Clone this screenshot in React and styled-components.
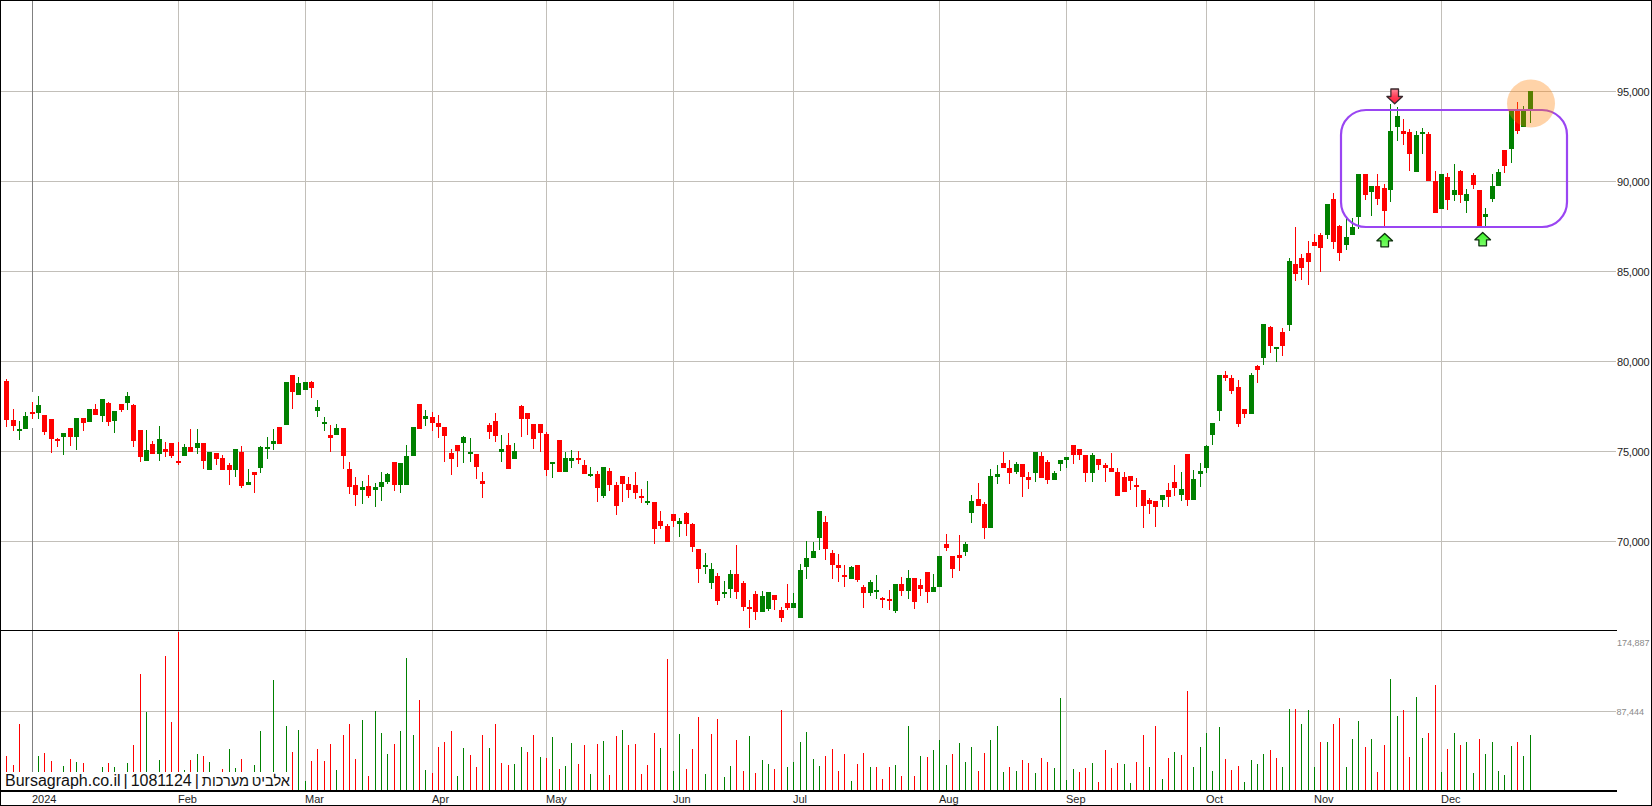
import React from "react";
import styled, { createGlobalStyle } from "styled-components";

const GlobalStyle = createGlobalStyle`
  html, body { margin: 0; padding: 0; background: #fff; overflow: hidden; }
`;

const Frame = styled.div`
  position: relative;
  box-sizing: border-box;
  width: 1652px;
  height: 806px;
  display: flex;
  flex-direction: column;
  background: #fff;
  border: 1px solid #000;
  font-family: "Liberation Sans", Arial, sans-serif;
`;
const PricePlot = styled.svg`
  display: block;
  flex: 0 0 629px;
  width: 1650px;
  height: 629px;
  shape-rendering: crispEdges;
`;
const VolumePanel = styled.div`
  position: relative;
  flex: 0 0 162px;
  height: 162px;
`;
const VolumePlot = styled.svg`
  display: block;
  width: 1650px;
  height: 162px;
  shape-rendering: crispEdges;
`;
const DateAxis = styled.svg`
  display: block;
  flex: 0 0 13px;
  width: 1650px;
  height: 13px;
`;
const Caption = styled.div`
  position: absolute;
  left: 3px;
  bottom: 2px;
  box-sizing: border-box;
  width: 287px;
  height: 18px;
  padding-left: 1px;
  background: #fff;
  color: #111;
  font-size: 16px;
  line-height: 18px;
  word-spacing: -1.5px;
  white-space: nowrap;
`;
const HebrewName = styled.span`
  font-size: 14.6px;
`;
const PriceTick = styled.text`
  font-size: 11px;
  letter-spacing: -0.2px;
  fill: #222;
  font-family: "Liberation Sans", Arial, sans-serif;
`;
const VolumeTick = styled.text`
  font-size: 9px;
  fill: #8a8a8a;
  font-family: "Liberation Sans", Arial, sans-serif;
`;
const DateTick = styled.text`
  font-size: 11px;
  fill: #222;
  font-family: "Liberation Sans", Arial, sans-serif;
`;

const UP = "#008000";
const DOWN = "#ff0000";
const GRID = "#c2bfb9";

// [zoomX, colour, high, bodyTop, bodyBottom, low]
const part = (ox, oy, s) =>
  s.trim().split(/\s+/).map((row) => {
    const [z, c, a, b, d, e] = row.split(",");
    return {
      x: ox + Math.floor(+z / 3),
      up: c === "g",
      hi: Math.round(oy + a / 3),
      top: Math.round(oy + b / 3),
      bot: Math.round(oy + d / 3),
      lo: Math.round(oy + e / 3),
    };
  });

const candles = [
  ...part(0, 360, `19,r,57,63,180,201 40,r,147,180,198,213 58,g,183,207,210,240 76,g,156,168,207,207 97,r,126,156,159,177 115,g,108,135,159,177 133,r,165,165,216,225 154,r,177,177,237,279 172,r,234,237,243,261 190,g,219,219,231,285 211,r,204,204,231,258 229,g,174,174,231,270 250,r,174,174,189,213 268,g,147,147,186,186 286,r,132,147,165,165 307,g,117,117,168,186 325,r,126,129,186,198 343,g,153,153,183,219 364,r,132,132,150,156 382,g,96,108,129,150 400,r,132,135,243,261 421,r,210,210,291,306 439,g,210,270,303,303 457,r,243,252,282,282 478,g,198,237,282,303 496,r,246,267,276,291 514,r,249,249,288,294 535,r,246,303,306,315 553,g,252,261,288,288 571,r,207,261,276,276 592,g,207,249,264,282 610,r,249,249,303,327 628,g,276,276,330,330 649,r,279,279,297,315 667,r,285,294,330,330 688,r,309,315,330,375 706,g,267,267,330,351 724,r,258,276,378,384 745,g,327,366,375,375 763,r,336,336,345,399 781,g,258,261,324,339 802,g,231,261,267,297 820,g,207,243,252,270 838,r,201,201,252,252 859,g,66,66,195,195 877,r,45,45,96,147 895,g,51,69,105,105 916,g,66,66,90,90 934,r,63,66,84,114 952,g,120,141,153,171 973,g,171,186,189,213 991,r,195,225,234,276 1009,g,192,204,225,225 1030,r,204,204,288,327 1048,r,306,327,381,402 1066,r,351,375,405,438 1087,g,363,381,390,432 1105,r,345,378,408,414 1126,g,369,381,390,441 1144,g,336,366,381,423 1162,g,339,342,366,372 1183,r,306,306,375,393 1201,g,309,309,375,399 1219,g,255,288,375,375 1240,g,201,201,288,288 1258,r,132,132,207,207`),
  ...part(420, 390, `16,g,60,78,87,108 37,r,66,81,99,123 55,r,75,99,111,144 73,r,111,111,138,216 94,r,177,189,207,255 112,r,165,165,183,231 130,g,138,141,159,219 151,g,144,186,189,216 169,r,192,192,231,267 187,r,246,273,282,324 208,r,99,105,126,147 226,r,69,93,138,156 244,g,135,177,186,216 265,r,129,165,237,237 283,g,159,183,207,207 304,r,45,48,87,141 322,r,69,69,87,135 340,r,102,102,147,177 361,r,102,102,129,186 379,r,126,132,240,258 397,g,216,216,219,264 418,r,150,150,246,246 436,g,186,204,246,246 454,g,180,204,213,234 475,r,183,204,207,222 493,r,210,225,252,252 511,g,231,252,255,261 532,r,243,252,294,336 550,g,231,231,318,324 568,r,234,243,285,303 589,r,276,285,348,375 607,r,258,258,282,336 625,r,261,282,300,324 646,r,246,285,309,327 664,r,297,318,324,339 682,g,273,333,336,345 703,r,336,336,417,462 721,r,363,393,408,417 742,r,402,408,456,456 760,r,372,372,393,411 778,g,384,393,402,441 799,r,366,369,402,438 817,r,399,402,471,486 835,r,477,477,537,579 856,g,489,525,528,552 874,g,519,537,579,597 892,r,549,558,633,645 913,g,573,606,609,624 931,g,540,552,597,624 949,r,465,552,606,627 970,r,573,579,651,663 988,r,630,651,654,714 1006,r,603,612,666,690 1027,g,603,618,666,666 1045,g,606,606,657,663 1063,r,615,615,630,660 1084,r,651,660,684,696 1102,r,582,639,654,660 1120,g,609,639,654,654 1141,g,522,540,684,684 1159,g,453,504,531,567 1180,g,456,483,504,504 1198,g,363,363,444,480 1216,r,378,396,477,510 1237,r,480,489,525,567 1255,r,492,525,534,576`),
  ...part(840, 400, `13,r,495,524,531,561 34,g,498,501,537,537 52,r,495,495,540,546 70,r,555,561,579,624 91,g,540,546,579,588 109,g,525,570,573,597 127,r,591,594,597,624 148,r,570,597,600,630 166,g,552,552,633,639 184,r,531,552,573,588 205,g,510,534,573,597 223,r,534,534,606,627 241,r,537,555,567,588 262,r,516,516,576,609 280,g,522,561,576,576 298,g,468,468,561,561 319,r,402,432,444,453 337,r,468,468,507,534 358,r,405,465,474,513 376,g,426,432,456,468 394,g,285,303,339,369 415,r,249,297,318,318 433,r,306,312,384,417 451,g,207,228,384,384 472,g,195,222,231,252 490,r,156,189,204,204 508,r,180,204,219,252 529,g,186,192,216,222 547,r,192,192,231,291 565,r,216,231,240,267 586,g,156,156,219,246 604,r,156,168,234,234 622,r,180,186,240,252 643,g,213,219,240,240 661,g,180,180,192,213 679,g,171,171,180,204 700,r,135,135,165,192 718,r,147,147,165,180 736,r,165,165,219,246 757,g,159,165,219,246 775,r,177,177,195,210 796,r,189,195,204,246 814,r,159,204,216,216 832,r,204,216,288,288 853,r,216,231,276,276 871,r,228,228,243,270 889,r,234,255,261,321 910,r,270,270,318,384 928,r,294,300,312,342 946,r,303,303,321,381 967,g,285,285,300,321 985,r,249,270,291,321 1003,r,195,246,264,288 1024,g,216,267,285,303 1042,r,162,162,300,318 1060,g,210,237,300,300 1081,g,189,213,222,261 1099,g,135,138,204,219 1117,g,69,69,105,135`),
  ...part(1180, 70, `118,g,915,915,1023,1053 136,r,903,915,923,933 154,r,915,924,962,972 175,r,930,951,1062,1071 193,r,1017,1017,1032,1044 214,g,909,915,1032,1032 232,r,885,888,900,938 250,g,762,762,864,885 271,r,768,771,828,849 289,g,831,831,837,876 307,r,774,786,828,858 328,g,564,573,765,783 346,r,471,582,612,633 364,r,552,564,594,630 385,r,513,549,576,645 403,r,492,516,528,528 421,r,489,495,534,606 442,g,402,402,495,507 460,r,369,387,516,537 478,r,465,468,549,573 499,g,440,501,525,540 517,g,445,471,495,495 535,g,312,312,441,477 556,r,312,312,375,390 574,g,348,348,366,438 592,r,312,348,387,405 613,r,342,354,423,468 631,g,102,183,360,396 652,g,111,138,171,213 670,r,147,183,192,225 688,r,177,186,252,303 709,g,183,195,306,306 727,g,174,186,189,252 745,r,186,192,333,333 766,r,303,333,429,429 784,g,312,312,417,417 802,r,309,321,390,420 823,g,282,360,375,393 841,r,300,303,375,399 859,g,357,372,393,429 880,r,309,315,345,357 898,r,360,360,468,468 916,g,414,432,441,471 937,g,312,348,387,396 955,g,297,306,348,348 973,r,240,240,288,309 994,g,117,117,237,279 1012,r,96,123,183,192 1030,g,108,117,171,171 1052,g,63,63,117,159`),
];

// one entry per candle: colour and height of the bar ("_" = hidden by the caption)
const volumes = `r408 r435 r312 _ _ g408 r399 r423 _ g438 r417 g426 r429 _ _ g441 r429 g441 _ g429 r375 r162 g276 _ g420 r108 r306 r35 g450 r420 g402 r408 g426 _ r447 g387 g444 r417 _ g435 g333 _ g180 _ g318 r396 g330 g483 r423 r387 r423 r372 g450 r345 r312 r417 g300 r468 g273 g339 g402 r372 g333 g114 g345 r240 g450 r459 r381 r366 r333 g468 g384 r405 r441 r345 g384 r312 r429 r435 g432 g381 r396 r345 g411 r414 g351 r447
g438 g369 r432 r375 g462 r372 g363 r465 r348 g330 r375 r372 r462 r435 r339 g384 r117 g453 g342 r447 r387 r291 g462 r342 r297 g471 g438 r360 r453 g348 r459 g420 g432 r447 r270 g441 g426 g366 g336 g417 g438 r408 r387 r453 r402 g483 r432 r399 g441 r441 r477 r441 g435 r468 g318 r468 g408 r411 g390 g360 g435 r402 g369 g426 g381 r453 r399 g360 g318 g456 r441 g453 r420 r429 g459 r414 r426 g444 g234 g480 g447 r456 r444 g429 r486 r390 r444 r429
g432 g489 r426 r345 g441 r318 g477 r414 g396 r405 r213 g441 g381 g339 g453 g321 r417 r450 r438 g486 g420 g432 g402 r390 r414 g441 g267 r267 g312 g270 g441 r366 g366 r312 r294 g441 g357 g303 r381 g357 r456 r375 g177 g288 r270 r411 g231 g354 r339 r195 g456 r387 g339 r375 g366 g459 r357 g402 g366 g453 g465 g378 r366 g408 g345`
  .trim()
  .split(/\s+/);

const priceTicks = [
  [91, "95,000"],
  [181, "90,000"],
  [271, "85,000"],
  [361, "80,000"],
  [451, "75,000"],
  [541, "70,000"],
];
const months = [
  [178, "Feb"],
  [305, "Mar"],
  [432, "Apr"],
  [546, "May"],
  [673, "Jun"],
  [793, "Jul"],
  [939, "Aug"],
  [1066, "Sep"],
  [1206, "Oct"],
  [1314, "Nov"],
  [1441, "Dec"],
];

const Candle = ({ c }) => {
  const color = c.up ? UP : DOWN;
  return (
    <g fill={color}>
      <rect x={c.x} y={c.hi} width="1" height={Math.max(c.lo - c.hi, 1)} />
      <rect x={c.x - 2} y={c.top} width="5" height={Math.max(c.bot - c.top, 2)} />
    </g>
  );
};

const Arrow = ({ cx, y, down }) => {
  const pts = down
    ? `${cx - 3.8},${y} ${cx + 3.8},${y} ${cx + 3.8},${y + 7.5} ${cx + 7.8},${y + 7.5} ${cx},${y + 14.8} ${cx - 7.8},${y + 7.5} ${cx - 3.8},${y + 7.5}`
    : `${cx},${y} ${cx + 7.8},${y + 7.3} ${cx + 3.8},${y + 7.3} ${cx + 3.8},${y + 13.3} ${cx - 3.8},${y + 13.3} ${cx - 3.8},${y + 7.3} ${cx - 7.8},${y + 7.3}`;
  return (
    <polygon
      points={pts}
      fill={down ? "url(#arrowDown)" : "url(#arrowUp)"}
      stroke={down ? "#3a2a2e" : "#0d300d"}
      strokeWidth="1.3"
      strokeLinejoin="round"
      shapeRendering="geometricPrecision"
    />
  );
};

export default function App() {
  return (
    <>
      <GlobalStyle />
      <Frame>
        <PricePlot viewBox="1 1 1650 629">
          <defs>
            <linearGradient id="arrowDown" x1="0" y1="0" x2="0" y2="1">
              <stop offset="0" stopColor="#ff8a9a" />
              <stop offset="0.5" stopColor="#ff3f58" />
              <stop offset="1" stopColor="#ff1c3a" />
            </linearGradient>
            <linearGradient id="arrowUp" x1="0" y1="0" x2="0" y2="1">
              <stop offset="0" stopColor="#3cf02a" />
              <stop offset="1" stopColor="#7dff6a" />
            </linearGradient>
          </defs>
          {priceTicks.map(([y]) => (
            <rect key={y} x="1" y={y} width="1615" height="1" fill={GRID} />
          ))}
          {months.map(([x]) => (
            <rect key={x} x={x} y="1" width="1" height="629" fill={GRID} />
          ))}
          <rect x="32" y="1" width="1" height="391" fill="#808080" />
          <rect x="32" y="428" width="1" height="202" fill="#808080" />
          {candles.map((c, i) => (
            <Candle key={i} c={c} />
          ))}
          <rect
            x="1341"
            y="110"
            width="226"
            height="117"
            rx="25"
            fill="none"
            stroke="#9a45f2"
            strokeWidth="2.2"
            shapeRendering="geometricPrecision"
          />
          <circle
            cx="1531"
            cy="103.5"
            r="24"
            fill="rgba(255,126,0,0.34)"
            shapeRendering="geometricPrecision"
          />
          <Arrow cx={1394.7} y={89} down />
          <Arrow cx={1384.7} y={233.5} />
          <Arrow cx={1482.7} y={232.5} />
          {priceTicks.map(([y, label]) => (
            <PriceTick key={label} x="1617" y={y + 4.5}>
              {label}
            </PriceTick>
          ))}
        </PricePlot>
        <VolumePanel>
          <VolumePlot viewBox="1 630 1650 162">
            <rect x="1" y="711" width="1615" height="1" fill={GRID} />
            {months.map(([x]) => (
              <rect key={x} x={x} y="630" width="1" height="160" fill={GRID} />
            ))}
            <rect x="32" y="630" width="1" height="160" fill="#808080" />
            {volumes.map((v, i) => {
              if (v === "_") return null;
              const y = Math.round(620 + Number(v.slice(1)) / 3);
              return (
                <rect
                  key={i}
                  x={candles[i].x}
                  y={y}
                  width="1"
                  height={790 - y}
                  fill={v[0] === "g" ? UP : DOWN}
                />
              );
            })}
            <rect x="1" y="630" width="1616" height="1" fill="#000" />
            <rect x="1" y="790" width="1616" height="2" fill="#000" />
            <VolumeTick x="1617" y="645.5">174,887</VolumeTick>
            <VolumeTick x="1616.5" y="715">87,444</VolumeTick>
          </VolumePlot>
          <Caption>
            Bursagraph.co.il | 1081124 | <HebrewName>אלביט מערכות</HebrewName>
          </Caption>
        </VolumePanel>
        <DateAxis viewBox="1 792 1650 13">
          <DateTick x="32" y="803">2024</DateTick>
          {months.map(([x, label]) => (
            <DateTick key={label} x={x} y="803">
              {label}
            </DateTick>
          ))}
        </DateAxis>
      </Frame>
    </>
  );
}
